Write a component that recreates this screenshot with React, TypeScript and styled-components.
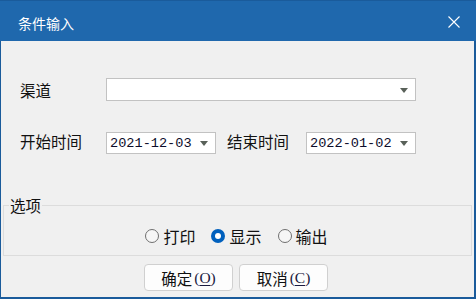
import React from 'react';
import styled, { createGlobalStyle, css } from 'styled-components';

const GlobalStyle = createGlobalStyle`
  html, body {
    margin: 0;
    padding: 0;
    background: #f0f0f0;
  }
  body {
    font-family: "Noto Sans CJK SC", "Noto Sans", sans-serif;
  }
`;

const Window = styled.div`
  width: 476px;
  height: 299px;
  box-sizing: border-box;
  display: flex;
  flex-direction: column;
  background: #f0f0f0;
  border: 1px solid #1a5b9b;
  border-top: none;
  border-right-width: 2px;
  border-bottom-width: 2px;
`;

const TitleBar = styled.div`
  height: 41px;
  flex: none;
  margin: 0 -2px 0 -1px;
  padding: 0 16px 0 18px;
  display: flex;
  align-items: center;
  justify-content: space-between;
  background: #1f68ad;
  border-top: 1px solid #1a5b9b;
  box-sizing: border-box;
`;

const Title = styled.span`
  color: #ffffff;
  font-size: 14px;
  line-height: 18px;
  margin-top: 4px;
`;

const CloseButton = styled.div`
  width: 12px;
  height: 12px;
  margin-top: 1px;
  display: flex;
`;

const Body = styled.div`
  flex: 1;
  display: flex;
  flex-direction: column;
  padding-top: 37px;
`;

const Row = styled.div<{ gap?: number }>`
  display: flex;
  align-items: center;
  padding-left: 19px;
  margin-top: ${({ gap }) => gap ?? 0}px;
`;

const Label = styled.span<{ width: number; lift?: number; indent?: number }>`
  width: ${({ width }) => width}px;
  flex: none;
  font-size: 15.5px;
  line-height: 18px;
  color: #111;
  margin-left: ${({ indent }) => indent ?? 0}px;
  margin-bottom: ${({ lift }) => lift ?? 0}px;
`;

const Combo = styled.div<{ width: number; height: number }>`
  width: ${({ width }) => width}px;
  height: ${({ height }) => height}px;
  box-sizing: border-box;
  display: flex;
  align-items: center;
  justify-content: space-between;
  padding: 0 7px 0 3px;
  background: #ffffff;
  border: 1px solid #c2c2c2;
`;

const ComboText = styled.span`
  font-family: "Liberation Mono", "DejaVu Sans Mono", monospace;
  font-size: 13.6px;
  color: #0c0c2a;
`;

const Arrow = styled.span`
  width: 0;
  height: 0;
  border-left: 4.5px solid transparent;
  border-right: 4.5px solid transparent;
  border-top: 5px solid #596159;
  margin-top: 1px;
`;

const Options = styled.fieldset`
  margin: 42px 2px 0 2px;
  padding: 13px 0 10px 0;
  border: 1px solid #dcdcdc;
  min-width: 0;
`;

const Legend = styled.legend`
  margin-left: 5px;
  padding: 0 1px;
  font-size: 15.5px;
  line-height: 18px;
  color: #111;
`;

const RadioGroup = styled.div`
  display: flex;
  justify-content: center;
  gap: 16px;
  height: 18px;
  padding-right: 2px;
`;

const RadioItem = styled.label`
  display: flex;
  align-items: center;
  gap: 4px;
  font-size: 16px;
  line-height: 18px;
  color: #111;
`;

const RadioDot = styled.span<{ checked?: boolean }>`
  width: 14px;
  height: 14px;
  box-sizing: border-box;
  border-radius: 50%;
  flex: none;
  ${({ checked }) =>
    checked
      ? css`
          position: relative;
          background: #0060bd;
          &::after {
            content: '';
            position: absolute;
            left: 4px;
            top: 4px;
            width: 6px;
            height: 6px;
            border-radius: 50%;
            background: #ffffff;
          }
        `
      : css`
          background: #f6f6f6;
          border: 1px solid #6f6f6f;
        `}
`;

const ButtonRow = styled.div`
  display: flex;
  justify-content: center;
  gap: 6px;
  margin-top: 8px;
  padding-right: 3px;
`;

const Button = styled.div`
  width: 89px;
  height: 27px;
  box-sizing: border-box;
  display: flex;
  align-items: center;
  justify-content: center;
  background: #fdfdfd;
  border: 1px solid #d0d0d0;
  border-radius: 4px;
  font-size: 15.5px;
  color: #111;
`;

const Mnemonic = styled.span`
  font-family: "Liberation Serif", serif;
  font-size: 15.5px;
  color: #1a1a40;
  margin-left: 2px;

  u {
    text-underline-offset: 2px;
  }
`;

const App: React.FC = () => {
  return (
    <>
      <GlobalStyle />
      <Window>
        <TitleBar>
          <Title>条件输入</Title>
          <CloseButton>
            <svg width="12" height="12" viewBox="0 0 12 12">
              <path d="M0.5 0.5 L11.5 11.5 M11.5 0.5 L0.5 11.5" stroke="#ffffff" strokeWidth="1.1" fill="none" />
            </svg>
          </CloseButton>
        </TitleBar>
        <Body>
          <Row>
            <Label width={86}>渠道</Label>
            <Combo width={310} height={23}>
              <span />
              <Arrow />
            </Combo>
          </Row>
          <Row gap={31}>
            <Label width={86} lift={4}>开始时间</Label>
            <Combo width={110} height={22}>
              <ComboText>2021-12-03</ComboText>
              <Arrow />
            </Combo>
            <Label width={79} lift={4} indent={11}>结束时间</Label>
            <Combo width={110} height={22}>
              <ComboText>2022-01-02</ComboText>
              <Arrow />
            </Combo>
          </Row>
          <Options>
            <Legend>选项</Legend>
            <RadioGroup>
              <RadioItem>
                <RadioDot />
                打印
              </RadioItem>
              <RadioItem>
                <RadioDot checked />
                显示
              </RadioItem>
              <RadioItem>
                <RadioDot />
                输出
              </RadioItem>
            </RadioGroup>
          </Options>
          <ButtonRow>
            <Button>
              确定
              <Mnemonic>
                (<u>O</u>)
              </Mnemonic>
            </Button>
            <Button>
              取消
              <Mnemonic>
                (<u>C</u>)
              </Mnemonic>
            </Button>
          </ButtonRow>
        </Body>
      </Window>
    </>
  );
};

export default App;
